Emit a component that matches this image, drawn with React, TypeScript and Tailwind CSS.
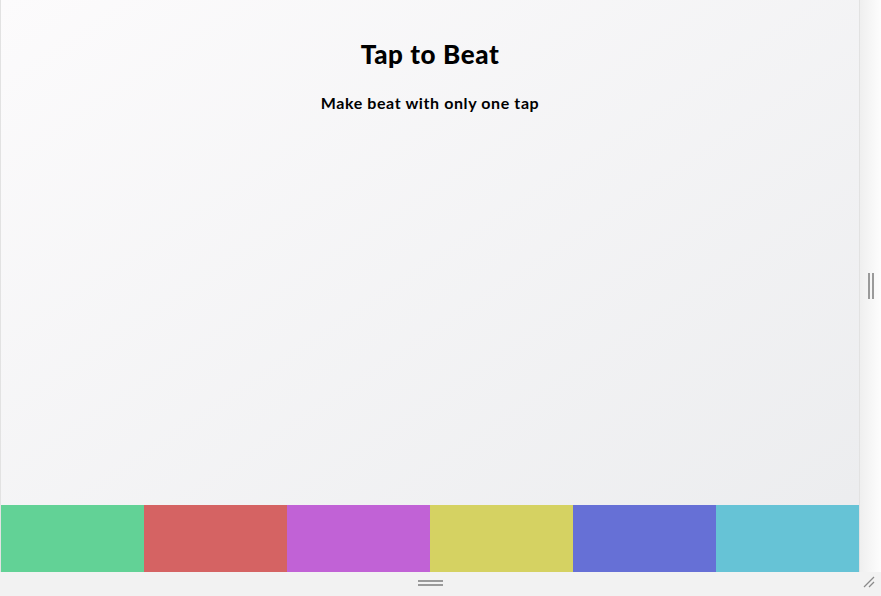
import React from "react";

const colors = ["#62d296", "#d56363", "#c162d6", "#d5d262", "#6670d6", "#66c3d6"];

export default function App() {
  return (
    <div className="w-[881px] h-[596px] flex flex-col bg-[#f3f3f3] overflow-hidden" style={{ fontFamily: "Lato, 'Noto Sans', sans-serif" }}>
      <div className="flex h-[572px]">
        <div className="w-[860px] h-full flex flex-col border-l border-r border-[#e2e2e2] bg-gradient-to-br from-[#fcfbfc] to-[#ebecee]">
          <div className="flex-1 flex flex-col items-center pt-[38px]">
            <h1 className="text-[26px] font-black text-black leading-[32px] tracking-[0.6px]">Tap to Beat</h1>
            <p className="mt-[23px] text-[16px] font-bold text-black leading-[20px] tracking-[0.6px]">Make beat with only one tap</p>
          </div>
          <div className="flex h-[67px]">
            {colors.map((c) => (
              <div key={c} className="flex-1 h-full" style={{ backgroundColor: c }} />
            ))}
          </div>
        </div>
        <div className="flex-1 flex items-center justify-center bg-gradient-to-r from-[#efefef] to-[#fdfdfd]">
          <div className="flex gap-[2px] h-[26px]">
            <div className="w-[2px] bg-[#9a9a9a]" />
            <div className="w-[2px] bg-[#9a9a9a]" />
          </div>
        </div>
      </div>
      <div className="flex-1 relative flex bg-[#f2f2f2]">
        <div className="w-[860px] flex justify-center items-center">
          <div className="flex flex-col gap-[2px] w-[25px] mb-[2px]">
            <div className="h-[2px] bg-[#9a9a9a]" />
            <div className="h-[2px] bg-[#9a9a9a]" />
          </div>
        </div>
        <svg className="absolute right-[6px] bottom-[8px]" width="12" height="12" viewBox="0 0 12 12">
          <line x1="1" y1="11" x2="11" y2="1" stroke="#8a8a8a" strokeWidth="1.2" />
          <line x1="6" y1="11" x2="11" y2="6" stroke="#8a8a8a" strokeWidth="1.2" />
        </svg>
      </div>
    </div>
  );
}
